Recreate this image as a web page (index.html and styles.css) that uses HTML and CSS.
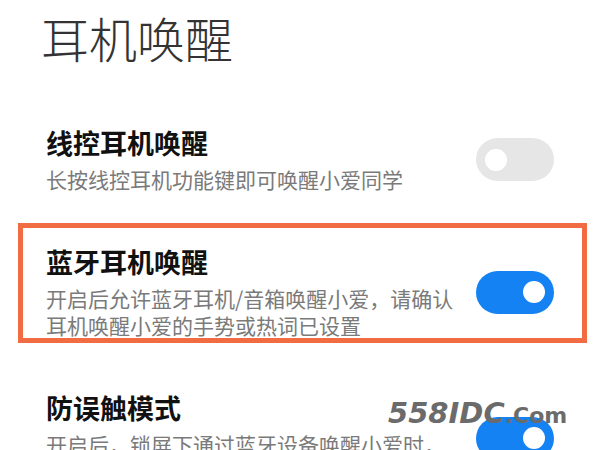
FILE: index.html
```html
<!DOCTYPE html>
<html lang="zh-CN">
<head>
    <meta charset="UTF-8">
    <title>耳机唤醒</title>
    <link rel="stylesheet" href="styles.css">
</head>
<body>
    <div class="page">
        <h1 class="page-title">耳机唤醒</h1>

        <div class="setting">
            <div class="setting-text">
                <div class="setting-name">线控耳机唤醒</div>
                <div class="setting-desc">长按线控耳机功能键即可唤醒小爱同学</div>
            </div>
            <span class="switch"><span class="knob"></span></span>
        </div>

        <div class="setting marked">
            <div class="setting-text">
                <div class="setting-name">蓝牙耳机唤醒</div>
                <div class="setting-desc">开启后允许蓝牙耳机/音箱唤醒小爱，请确认耳机唤醒小爱的手势或热词已设置</div>
            </div>
            <span class="switch on"><span class="knob"></span></span>
        </div>

        <div class="setting">
            <div class="setting-text">
                <div class="setting-name">防误触模式</div>
                <div class="setting-desc">开启后，锁屏下通过蓝牙设备唤醒小爱时，需先解锁手机</div>
            </div>
            <span class="switch on"><span class="knob"></span></span>
        </div>

        <div class="watermark">558IDC<small>.Com</small></div>
    </div>
</body>
</html>
```

FILE: styles.css
```css
body {
    margin: 0;
    background: #fff;
    font-family: "Noto Sans CJK SC", sans-serif;
}
.page {
    position: relative;
}
.page-title {
    margin: 0 0 31px;
    padding: 5px 46px 0 41px;
    font-size: 48px;
    line-height: 64px;
    font-weight: 300;
    color: #333;
}
.setting {
    position: relative;
    display: flex;
    align-items: center;
    padding: 26px 46px;
}
.setting-text {
    flex: 1;
    min-width: 0;
}
.setting-name {
    font-size: 27px;
    line-height: 34px;
    font-weight: 700;
    color: #111;
}
.setting-desc {
    margin-top: 6px;
    font-size: 21px;
    line-height: 27px;
    color: #7a7a7a;
}
.switch {
    flex: none;
    display: flex;
    align-items: center;
    box-sizing: border-box;
    width: 78px;
    height: 43px;
    margin-left: 20px;
    padding: 0 9px;
    border-radius: 22px;
    background: #e6e6e6;
}
.switch.on {
    justify-content: flex-end;
    background: #1482f2;
}
.knob {
    width: 22px;
    height: 22px;
    border-radius: 50%;
    background: #fff;
}
/* annotation frame around the highlighted row */
.marked::after {
    content: "";
    position: absolute;
    top: 4px;
    right: 13px;
    bottom: 22px;
    left: 18px;
    border: 5px solid #f26c43;
}
.watermark {
    position: absolute;
    left: 388px;
    top: 399px;
    font-family: "DejaVu Sans", sans-serif;
    font-size: 29px;
    line-height: 29px;
    font-weight: 700;
    font-style: italic;
    color: #6b6b6b;
}
.watermark small {
    font-size: 22px;
    font-style: normal;
}
```
